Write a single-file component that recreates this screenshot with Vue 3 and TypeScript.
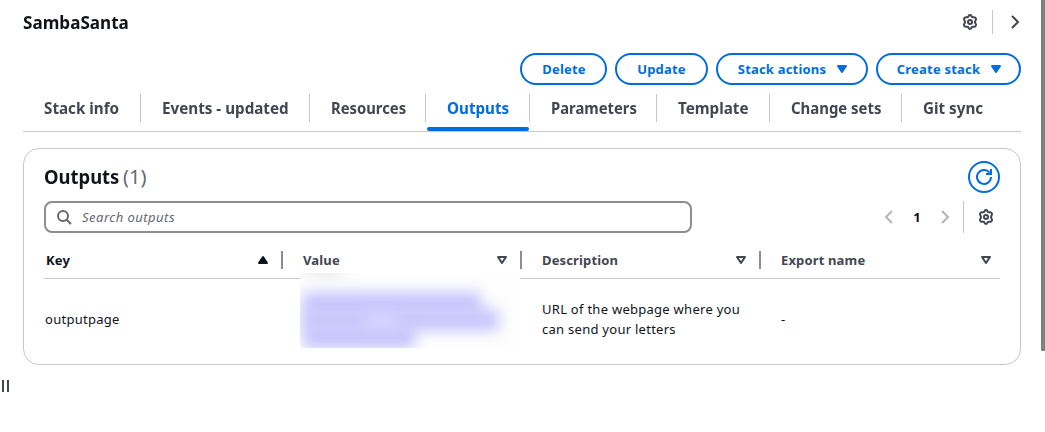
<script setup lang="ts">
interface Tab {
  label: string
  cls: string
}
interface Column {
  label: string
  cls: string
  sorted: boolean
}

const tabs: Tab[] = [
  { label: 'Stack info', cls: 't-info' },
  { label: 'Events - updated', cls: 't-events' },
  { label: 'Resources', cls: 't-resources' },
  { label: 'Outputs', cls: 't-outputs' },
  { label: 'Parameters', cls: 't-params' },
  { label: 'Template', cls: 't-template' },
  { label: 'Change sets', cls: 't-changes' },
  { label: 'Git sync', cls: 't-git' },
]
const active = 'Outputs'

const actions = [
  { label: 'Delete', cls: 'b-delete', menu: false },
  { label: 'Update', cls: 'b-update', menu: false },
  { label: 'Stack actions', cls: 'b-stack', menu: true },
  { label: 'Create stack', cls: 'b-create', menu: true },
]

const columns: Column[] = [
  { label: 'Key', cls: 'c-key', sorted: true },
  { label: 'Value', cls: 'c-value', sorted: false },
  { label: 'Description', cls: 'c-desc', sorted: false },
  { label: 'Export name', cls: 'c-export', sorted: false },
]

const gear =
  'M6.4 2.6Q6.6 1.1 8 1.1T9.6 2.6Q10.3 3.6 11.6 3.2Q13 2.9 13.8 4.2Q14.5 5.5 13.5 6.4Q12.5 8 13.5 9.6Q14.5 10.5 13.8 11.8Q13 13.1 11.6 12.8Q10.3 12.4 9.6 13.4Q9.4 14.9 8 14.9T6.4 13.4Q5.7 12.4 4.4 12.8Q3 13.1 2.2 11.8Q1.5 10.5 2.5 9.6Q3.5 8 2.5 6.4Q1.5 5.5 2.2 4.2Q3 2.9 4.4 3.2Q5.7 3.6 6.4 2.6z'
</script>

<template>
  <div class="page">
    <main class="panel">
      <header class="top">
        <h1><span>SambaSanta</span></h1>
        <div class="tools">
          <svg class="icon" viewBox="0 0 16 16"><path :d="gear" /><circle cx="8" cy="8" r="2" /></svg>
          <i class="rule"></i>
          <svg class="icon" viewBox="0 0 16 16"><path d="M5 2l6 6-6 6" /></svg>
        </div>
      </header>

      <div class="actions">
        <button v-for="a in actions" :key="a.label" :class="a.cls">
          <span>{{ a.label }}</span>
          <svg v-if="a.menu" viewBox="0 0 16 16"><path d="M4 5h8l-4 6z" /></svg>
        </button>
      </div>

      <nav class="tabs">
        <a v-for="t in tabs" :key="t.label" :class="[t.cls, { active: t.label === active }]">
          <span>{{ t.label }}</span>
        </a>
      </nav>

      <section class="card">
        <div class="heading">
          <h2><span class="name">Outputs</span><span class="count">(1)</span></h2>
          <button class="refresh">
            <svg viewBox="0 0 16 16"><path d="M15 8a7 7 0 1 1-1.5-4.4" /><path d="M15 0v5h-5" /></svg>
          </button>
        </div>
        <div class="filter">
          <div class="search">
            <svg class="icon" viewBox="0 0 16 16"><circle cx="7" cy="7" r="5" /><path d="M10.7 10.7l4.3 4.3" /></svg>
            <span>Search outputs</span>
          </div>
          <div class="pager">
            <svg class="icon dim" viewBox="0 0 16 16"><path d="M11 2L5 8l6 6" /></svg>
            <b>1</b>
            <svg class="icon dim" viewBox="0 0 16 16"><path d="M5 2l6 6-6 6" /></svg>
            <i class="rule"></i>
            <svg class="icon" viewBox="0 0 16 16"><path :d="gear" /><circle cx="8" cy="8" r="2" /></svg>
          </div>
        </div>
        <div class="row head">
          <div v-for="c in columns" :key="c.label" class="cell" :class="[c.cls, { sorted: c.sorted }]">
            <span>{{ c.label }}</span>
            <svg viewBox="0 0 16 16">
              <path v-if="c.sorted" class="solid" d="M4 11h8L8 5z" />
              <path v-else d="M4 5h8l-4 6z" />
            </svg>
          </div>
        </div>
        <div class="row body">
          <div class="cell c-key"><span>outputpage</span></div>
          <div class="cell c-value">
            <div class="redacted">
              <i class="smudge s0"></i><i class="smudge s1"></i><i class="smudge s2"></i><i class="smudge s3"></i>
              <i class="smudge s4"></i>
            </div>
          </div>
          <div class="cell c-desc"><span>URL of the webpage where you<br />can send your letters</span></div>
          <div class="cell c-export"><span>-</span></div>
        </div>
      </section>
      <div class="handle"><i></i><i></i></div>
    </main>
    <div class="scrollbar"></div>
  </div>
</template>

<style>
body {
  margin: 0;
  background: #fff;
}
</style>

<style scoped>
* {
  box-sizing: border-box;
}
.page {
  display: flex;
  justify-content: space-between;
  width: 1045px;
  height: 432px;
  overflow: hidden;
  background: #fff;
  color: #0f141a;
  font: 13px/20px 'Noto Sans', 'Open Sans', sans-serif;
}
.panel {
  width: 1021px;
  padding-left: 23px;
}
.scrollbar {
  width: 4px;
  height: 351px;
  background: #7d817f;
  border-radius: 0 0 0 1px;
}
span {
  white-space: nowrap;
}
.icon {
  width: 16px;
  height: 16px;
  fill: none;
  stroke: #424650;
  stroke-width: 2;
  flex: none;
}
.top {
  display: flex;
  justify-content: space-between;
  align-items: center;
  height: 44px;
}
h1 {
  margin: 0;
  font-size: 18px;
  line-height: 24px;
  font-weight: 700;
}
h1 span,
h2 .name,
.tabs span {
  display: inline-block;
  transform-origin: left center;
  transform: scaleX(0.95);
}
.tools {
  display: flex;
  align-items: center;
}
.rule {
  width: 1px;
  height: 24px;
  background: #c6c6cd;
}
.tools .rule {
  margin: 0 14px;
}
.tools .icon:last-child {
  margin-right: -2px;
}
.actions {
  display: flex;
  justify-content: flex-end;
  gap: 8px;
  margin-top: 9px;
}
button {
  display: flex;
  align-items: center;
  justify-content: center;
  height: 32px;
  padding: 0;
  border: 2px solid #006ce0;
  border-radius: 16px;
  background: #fff;
  color: #006ce0;
  font: 700 13px/20px 'Noto Sans', 'Open Sans', sans-serif;
  letter-spacing: 0.2px;
}
button svg {
  width: 16px;
  height: 16px;
  margin-left: 8px;
  fill: #006ce0;
  stroke: #006ce0;
  stroke-width: 2;
  stroke-linejoin: round;
}
.b-delete {
  width: 87px;
  padding-left: 1px;
}
.b-update {
  width: 93px;
}
.b-stack {
  width: 152px;
  padding-left: 4px;
}
.b-create {
  width: 145px;
  padding-left: 4px;
}
.tabs {
  display: flex;
  height: 47px;
  border-bottom: 1px solid #c6c6cd;
  color: #424650;
  font-size: 16px;
  font-weight: 700;
}
.tabs a {
  position: relative;
  height: 28px;
  margin-top: 9px;
  padding-left: 21px;
  line-height: 28px;
  border-right: 1px solid #c6c6cd;
}
.tabs a:last-child {
  border: 0;
}
.tabs .active {
  color: #006ce0;
}
.tabs .active::after {
  content: '';
  position: absolute;
  left: 1px;
  right: 0;
  bottom: -9px;
  height: 4px;
  border-radius: 2px;
  background: #006ce0;
}
.t-info {
  width: 118px;
}
.t-events {
  width: 169px;
}
.t-resources {
  width: 116px;
}
.t-outputs {
  width: 104px;
}
.t-params {
  width: 127px;
}
.t-template {
  width: 113px;
}
.t-changes {
  width: 132px;
}
.tabs .t-resources span,
.tabs .t-params span {
  transform: scaleX(0.925);
}
.tabs .t-changes span {
  transform: scaleX(0.932);
}
.card {
  height: 217px;
  margin-top: 16px;
  padding: 12px 20px 0;
  border: 1px solid #c6c6cd;
  border-radius: 16px;
}
.heading {
  display: flex;
  justify-content: space-between;
  height: 32px;
}
h2 {
  display: flex;
  margin: 0;
  font-size: 20px;
  line-height: 32px;
  font-weight: 700;
}
h2 .name {
  width: 79px;
  transform: scaleX(0.92);
}
.count {
  color: #656871;
  font-weight: 400;
}
.refresh {
  width: 32px;
}
.refresh svg {
  margin: 0;
  fill: none;
  stroke-linejoin: miter;
}
.filter {
  display: flex;
  justify-content: space-between;
  margin-top: 8px;
}
.search {
  display: flex;
  align-items: center;
  gap: 10px;
  width: 648px;
  height: 32px;
  padding-left: 10px;
  border: 2px solid #8c8c94;
  border-radius: 8px;
  color: #656871;
  font-style: italic;
  letter-spacing: 0.48px;
}
.search .icon {
  stroke: #656871;
}
.pager {
  display: flex;
  align-items: center;
}
.dim {
  stroke: #b4b4bb;
}
.pager b {
  width: 40px;
  text-align: center;
}
.pager .rule {
  height: 32px;
  margin: 0 14px 0 10px;
}
.pager .icon:last-child {
  margin-right: 6px;
}
.row {
  display: grid;
  grid-template-columns: 239px 239px 239px 239px;
}
.cell {
  display: flex;
  align-items: center;
}
.head {
  height: 46px;
  padding-top: 9px;
  border-bottom: 1px solid #c6c6cd;
  color: #424650;
  font-weight: 700;
  letter-spacing: 0.15px;
}
.head .cell {
  height: 18px;
  margin-top: 9px;
  justify-content: space-between;
  padding-left: 20px;
  padding-right: 10px;
  border-right: 2px solid #8c8c94;
}
.head .cell.c-key {
  padding-left: 2px;
}
.head .cell:last-child {
  border: 0;
  padding-right: 6px;
}
.head .sorted {
  color: #0f141a;
}
.head svg {
  width: 16px;
  height: 16px;
  fill: none;
  stroke: #424650;
  stroke-width: 2;
  stroke-linejoin: round;
}
.head .solid {
  fill: #0f141a;
  stroke: #0f141a;
}
.body {
  height: 79px;
  letter-spacing: 0.27px;
}
.body .cell {
  padding-left: 20px;
}
.body .c-key {
  padding-left: 1px;
}
.body .c-value {
  position: relative;
}
.redacted {
  position: absolute;
  left: 17px;
  top: -6px;
  width: 220px;
  height: 75px;
  overflow: hidden;
  background: #fefefe;
}
.smudge {
  position: absolute;
  background: #c6c6fc;
  filter: blur(7px);
}
.s0 {
  left: 6px;
  top: -7px;
  width: 38px;
  height: 7px;
  background: #d8d8d8;
}
.s1 {
  left: 3px;
  top: 19px;
  width: 178px;
  height: 24px;
}
.s2 {
  left: 3px;
  top: 36px;
  width: 196px;
  height: 22px;
}
.s3 {
  left: 3px;
  top: 50px;
  width: 112px;
  height: 26px;
}
.s4 {
  left: 66px;
  top: 43px;
  width: 32px;
  height: 10px;
  background: #dcdcff;
}
.handle {
  display: flex;
  gap: 3px;
  margin: 15px 0 0 -21px;
}
.handle i {
  width: 2px;
  height: 12px;
  background: #424650;
}
</style>
